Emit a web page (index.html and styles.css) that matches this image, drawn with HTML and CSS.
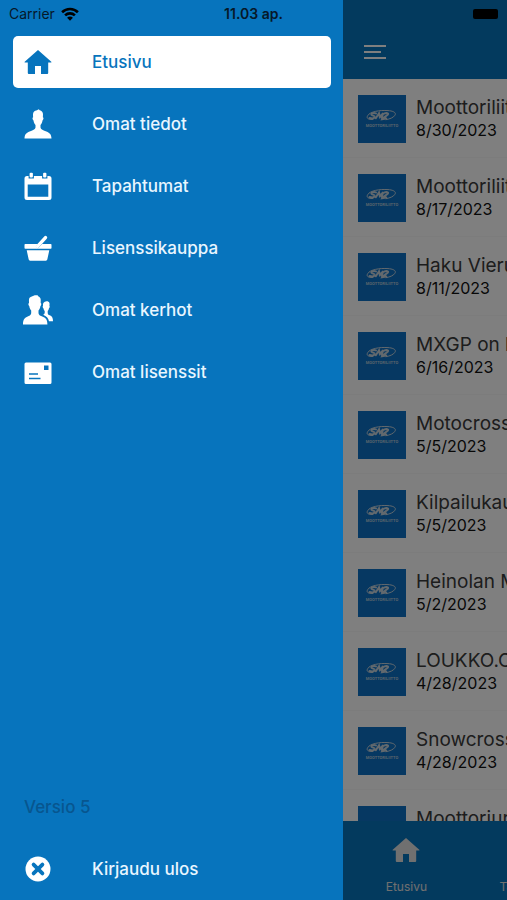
FILE: index.html
```html
<!DOCTYPE html>
<html lang="fi">
<head>
    <meta charset="UTF-8">
    <meta name="viewport" content="width=device-width, initial-scale=1.0">
    <title>Etusivu</title>
    <link rel="stylesheet" href="styles.css">
</head>
<body>
    <!-- shared icon -->
    <svg class="symbols" width="0" height="0" aria-hidden="true">
        <symbol id="home" viewBox="0 0 28 28">
            <path d="M14 2 27.300 13.800a.4.4 0 0 1-.3.700H24.200V25a1 1 0 0 1-1 1H17V18H11V26H4.800a1 1 0 0 1-1-1V14.500H1a.4.4 0 0 1-.3-.700Z"/>
        </symbol>
    </svg>

    <div class="app">
        <div class="status">
            <span class="carrier">Carrier
                <svg width="18" height="14" viewBox="0 0 18 14">
                    <g fill="none" stroke="currentColor" stroke-width="2.600">
                        <path d="M1.100 5.200a11.300 11.300 0 0 1 15.800 0"/>
                        <path d="M4.100 8.400a7 7 0 0 1 9.800 0"/>
                    </g>
                    <path d="M9 13.700 6.100 10.800a4 4 0 0 1 5.800 0Z" fill="currentColor"/>
                </svg>
            </span>
            <span class="time">11.03 ap.</span>
            <span class="battery"></span>
        </div>

        <nav class="drawer">
            <a href="#" class="item item-active">
                <svg class="icon"><use href="#home"/></svg>
                <span>Etusivu</span>
            </a>
            <a href="#" class="item">
                <svg class="icon" viewBox="0 0 28 28">
                    <path d="M14.800-.8c-.6 1-4.600 1-5.500 3.600-.6 1.600-.1 3.200-.2 4.500-.9.100-.8 2.200.4 3.300.3 2.300 1.200 3.600 2 4.300v2.600c-.4 2-2 2.500-4.500 3.400C3.200 22.300.5 23.500.5 28.500h27c0-5-2.700-6.200-6.500-7.600-2.500-.9-4.100-1.400-4.500-3.400v-2.600c.8-.7 1.700-2 2-4.300 1.200-1.100 1.300-3.200.4-3.300-.1-1.300.4-2.900-.2-4.500-.6-1.600-1.900-2.300-3-2.500Z"/>
                </svg>
                <span>Omat tiedot</span>
            </a>
            <a href="#" class="item">
                <svg class="icon" viewBox="0 0 28 28">
                    <path fill-rule="evenodd" d="M3 4H4.600V6.500H9.900V4h8.200v2.500h5.300V4H25a2.500 2.500 0 0 1 2.500 2.500v19A2.500 2.500 0 0 1 25 28H3A2.500 2.500 0 0 1 .5 25.500v-19A2.500 2.500 0 0 1 3 4ZM3.700 12.500V24.700H24.300V12.500Z"/>
                    <rect x="5.600" y=".8" width="3.300" height="4.700" rx="1"/>
                    <rect x="19.100" y=".8" width="3.300" height="4.700" rx="1"/>
                </svg>
                <span>Tapahtumat</span>
            </a>
            <a href="#" class="item">
                <svg class="icon" viewBox="0 0 28 28">
                    <path d="M1.200 10H14l-1.600 1.600c-1.500 1.500.6 3.600 2.100 2.100l3.700-3.700h8.600q.7 0 .7.700v3.300q0 .7-.7.700H1.200q-.7 0-.7-.7v-3.300q0-.7.700-.7Z"/>
                    <path d="M13.300 12.600 21.500 3.600" fill="none" stroke="currentColor" stroke-width="3.400" stroke-linecap="round"/>
                    <path d="M2.700 16.200H25.300L23.300 25.600a1.500 1.500 0 0 1-1.400 1.200H6.100A1.500 1.500 0 0 1 4.700 25.600Z"/>
                </svg>
                <span>Lisenssikauppa</span>
            </a>
            <a href="#" class="item">
                <svg class="icon icon-wide" viewBox="0 0 30 28">
                    <path d="M11.600-.8c-.6.900-4.600 1-5.400 3.400-.5 1.500-.1 3.200-.2 4.500-.9.100-.8 2.200.3 3.200.3 2.200 1.100 3.400 1.900 4.100v2.800c-.4 2-1.700 2.600-4 3.500C1.500 21.900 0 23.600 0 28.400h24.400c0-4.800-1.500-6.500-4.600-7.700-2.500-.9-3.900-1.500-4.300-3.500v-2.800c.8-.7 1.600-1.900 1.900-4.100 1.100-1 1.200-3.100.3-3.200-.1-1.300.3-3-.2-4.500-.6-1.700-2.300-2-2.900-3.400Z"/>
                    <path d="M23.600 5.200c-2.900.2-4 2-3.600 4.700-.6.200-.3 1.800.4 2.300.3 1.300.7 2.200 1.300 2.700v2.100c-.2.900-.7 1.300-1.600 1.700 3.400 1.500 5.200 3.300 5.900 6.500H30c0-3.500-1-4.900-3.300-5.900-1.300-.5-1.900-1.100-2-2.300v-2.100c.6-.5 1-1.400 1.300-2.700.7-.5 1-2.100.4-2.300.5-2.500.2-4.700-2.800-4.700Z"/>
                </svg>
                <span>Omat kerhot</span>
            </a>
            <a href="#" class="item">
                <svg class="icon" viewBox="0 0 28 28">
                    <path fill-rule="evenodd" d="M2 4.500H26A1.500 1.500 0 0 1 27.500 6V24.500A1.500 1.500 0 0 1 26 26H2A1.500 1.500 0 0 1 .5 24.500V6A1.500 1.500 0 0 1 2 4.500ZM20 7.500V12H24.500V7.500ZM5 15.200V16.700H14V15.200ZM5 19.800V21.300H16.500V19.800Z"/>
                </svg>
                <span>Omat lisenssit</span>
            </a>

            <div class="item version">Versio 5</div>
            <button type="button" class="item">
                <svg class="icon" viewBox="0 0 28 28">
                    <circle cx="14" cy="14" r="12.500"/>
                    <path d="M9.600 9.600 18.400 18.400M18.400 9.600 9.600 18.400" stroke="#0774bd" stroke-width="3.800" stroke-linecap="round"/>
                </svg>
                <span>Kirjaudu ulos</span>
            </button>
        </nav>

        <div class="page">
            <header class="header">
                <button type="button" class="burger" aria-label="Valikko">
                    <i></i><i></i><i></i>
                </button>
            </header>
            <main class="feed" id="feed"></main>
            <nav class="tabs">
                <a href="#" class="tab">
                    <svg class="icon"><use href="#home"/></svg>
                    <span>Etusivu</span>
                </a>
                <a href="#" class="tab">
                    <span>Tapahtumat</span>
                </a>
                <a href="#" class="tab"></a>
                <a href="#" class="tab"></a>
            </nav>
            <div class="shade"></div>
        </div>
    </div>

    <script>
        let feed = document.getElementById('feed')
        let data = [
            {title:'Moottoriliitto', date:'8/30/2023'},
            {title:'Moottoriliitto', date:'8/17/2023'},
            {title:'Haku Vierumäki', date:'8/11/2023'},
            {title:'MXGP on kohta', date:'6/16/2023'},
            {title:'Motocross', date:'5/5/2023'},
            {title:'Kilpailukausi', date:'5/5/2023'},
            {title:'Heinolan MK', date:'5/2/2023'},
            {title:'LOUKKO.COM', date:'4/28/2023'},
            {title:'Snowcross', date:'4/28/2023'},
            {title:'Moottoriurheilu', date:'4/28/2023'},
        ]
        let logo = `
            <svg class="thumb" viewBox="0 0 48 48">
                <path d="M15 24.500C10 25 8 23 9.800 20.500 12 16.500 22 15 30 15.600c6 .4 8.600 2.400 6.800 4.800C35.500 22.500 32 24 28 24.700"/>
                <path class="bold" d="M18 18.400c-3-.8-5.400.2-4.400 1.400.9 1 3.300.8 3 2.100-.4 1.400-3 1.600-5 1.100M17.800 23.200l3.200-4.900.8 3.600 3.400-3.700-1.600 4.600M26 18.600c2.600-1 5-.5 3.800 1-1.200 1.500-4.400 2.400-5.600 4.600l4-.6"/>
                <text x="24" y="32" text-anchor="middle">MOOTTORILIITTO</text>
            </svg>`
        for(let news of data){
            let div = document.createElement('div')
            div.className = 'news'
            div.innerHTML = logo + '<div class="news-text"><h2>' + news.title + '</h2><p>' + news.date + '</p></div>'
            feed.appendChild(div)
        }
    </script>
</body>
</html>
```
FILE: styles.css
```css
*{margin:0;padding:0;box-sizing:border-box;}
body{
    font-family: Inter, "Liberation Sans", sans-serif;
    background-color: #0774bd;
    overflow: hidden;
}
.symbols{
    position: absolute;
}
.app{
    position: relative;
    display: flex;height: 100vh;overflow: hidden;
}
/* status bar */
.status{
    position: absolute;top: 0;left: 0;right: 0;z-index: 1;
    display: grid;grid-template-columns: 1fr auto 1fr;align-items: center;
    height: 27px;padding: 0 9px;
    font-size: 14px;color: #06182a;
}
.carrier{
    display: flex;align-items: center;gap: 6px;
}
.carrier svg{
    color: #000;
}
.time{
    font-weight: 600;
}
.battery{
    justify-self: end;
    width: 25px;height: 10px;border-radius: 2px;
    background-color: #000;
}
/* side menu */
.drawer{
    flex: 0 0 343px;
    display: flex;flex-direction: column;gap: 10px;
    padding: 36px 12px 5px 13px;
    background-color: #0774bd;
}
.item{
    display: flex;align-items: center;gap: 40px;
    height: 52px;padding: 0 11px;
    border: 0;border-radius: 5px;background: none;
    font-family: inherit;font-size: 17px;font-weight: 500;
    color: #e9f6ff;text-decoration: none;text-align: left;
}
.item-active{
    background-color: #fff;color: #0774bd;
}
.icon{
    width: 28px;height: 28px;flex: none;
    fill: currentColor;overflow: visible;
}
.item .icon{
    color: #fff;
}
.item-active .icon{
    color: #0774bd;
}
.icon-wide{
    width: 30px;margin: 0 -1px;
}
.version{
    margin-top: auto;
    color: #07568f;
}
/* page behind the menu */
.page{
    position: relative;
    flex: 0 0 100%;
    display: flex;flex-direction: column;
    background-color: #fff;
}
.header{
    flex: none;
    height: 79px;padding: 45px 21px 0;
    background-color: #0774bd;
}
.burger{
    display: flex;flex-direction: column;gap: 4px;
    border: 0;background: none;
}
.burger i{
    width: 22px;height: 2px;
    background-color: #fff;
}
.burger i:nth-child(2){
    width: 17px;
}
.feed{
    flex: 1;min-height: 0;overflow: hidden;
}
.news{
    display: flex;align-items: center;gap: 10px;
    height: 79px;padding: 16px 15px 14px;
    border-bottom: 1px solid #f8f8f8;
}
.thumb{
    width: 48px;height: 48px;flex: none;
    background-color: #0c70c4;
    fill: none;stroke: #c4d2dc;stroke-linecap: round;
}
.thumb .bold{
    stroke-width: 2px;
}
.thumb text{
    font-family: Roboto, sans-serif;font-size: 4px;font-weight: 700;
    fill: #b4c8d8;stroke: none;
}
.news-text{
    line-height: 22px;white-space: nowrap;
}
.news h2{
    font-size: 19px;font-weight: 400;color: #3a3a3a;
}
.news p{
    font-size: 16px;color: #111;
}
/* bottom tabs */
.tabs{
    flex: none;
    display: flex;height: 79px;
    background-color: #0774bd;
}
.tab{
    flex: 1;
    display: flex;flex-direction: column;align-items: center;
    padding: 15px 0 5px;
    font-size: 12px;line-height: 16px;
    color: #e0e0e0;text-decoration: none;
}
.tab span{
    margin-top: auto;
}
.shade{
    position: absolute;top: 0;right: 0;bottom: 0;left: 0;
    background-color: rgba(0,0,0,.5);
}
```
